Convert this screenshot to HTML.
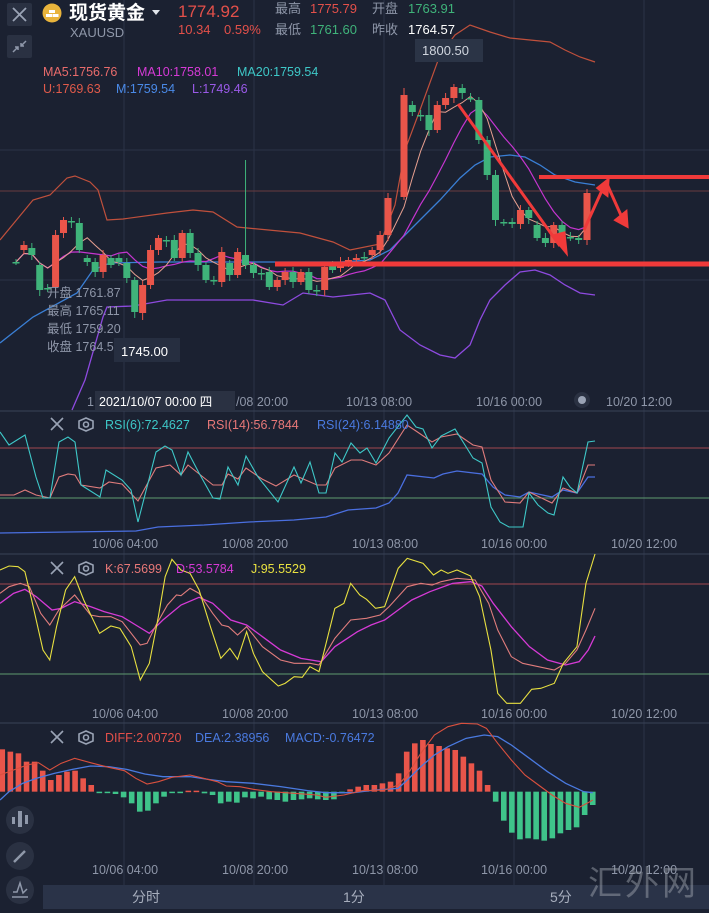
<!DOCTYPE html>
<html><head><meta charset="utf-8">
<style>
html,body{margin:0;padding:0;background:#1b2131;}
body{width:709px;height:913px;overflow:hidden;position:relative;font-family:"Liberation Sans","Noto Sans CJK SC",sans-serif;}
svg{position:absolute;left:0;top:0;}
text{font-family:"Liberation Sans","Noto Sans CJK SC",sans-serif;}
</style></head><body>
<svg id="s" width="709" height="913" viewBox="0 0 709 913" xmlns="http://www.w3.org/2000/svg">
<rect width="709" height="913" fill="#1b2131"/>
<g stroke="#2b3346" stroke-width="1">
<line x1="124" y1="0" x2="124" y2="885"/><line x1="254" y1="0" x2="254" y2="885"/>
<line x1="384" y1="0" x2="384" y2="885"/><line x1="514" y1="0" x2="514" y2="885"/>
<line x1="644" y1="0" x2="644" y2="885"/>
<line x1="0" y1="150" x2="709" y2="150"/><line x1="0" y1="280" x2="709" y2="280"/>
</g>
<line x1="0" y1="191" x2="709" y2="191" stroke="#6a3a3e" stroke-width="1"/>
<g stroke="#3a4356" stroke-width="1">
<line x1="0" y1="411" x2="709" y2="411"/><line x1="0" y1="554" x2="709" y2="554"/>
<line x1="0" y1="723" x2="709" y2="723"/>
</g>
<line x1="0" y1="448" x2="709" y2="448" stroke="#a24850" stroke-width="1"/>
<line x1="0" y1="498" x2="709" y2="498" stroke="#5f9a70" stroke-width="1"/>
<line x1="0" y1="584" x2="709" y2="584" stroke="#a24850" stroke-width="1"/>
<line x1="0" y1="674" x2="709" y2="674" stroke="#5f9a70" stroke-width="1"/>
<g id="main"></g>
<g id="osc"></g>
<line x1="275" y1="264" x2="709" y2="264" stroke="#f03a3a" stroke-width="5"/>
<line x1="539" y1="177" x2="709" y2="177" stroke="#f03a3a" stroke-width="4"/>
<g stroke="#f03a3a" stroke-width="3" fill="#f03a3a">
<line x1="458" y1="104" x2="560" y2="246"/>
<polygon points="553,236 566,252 564,233" />
<line x1="584" y1="230" x2="604" y2="186"/>
<polygon points="598,188 608,180 607,195"/>
<line x1="607" y1="184" x2="624" y2="222"/>
<polygon points="616,220 627,226 626,212"/>
</g>
<rect x="7" y="3" width="25" height="23" rx="2" fill="#2a3142"/>
<path d="M13 8 L26 21 M26 8 L13 21" stroke="#9aa3b5" stroke-width="1.8"/>
<rect x="7" y="35" width="25" height="23" rx="2" fill="#2a3142"/>
<path d="M13 52 L18 47 M15 47 H18 V50 M26 41 L21 46 M21 43 V46 H24" stroke="#8f98aa" stroke-width="1.5" fill="none"/>
<circle cx="52" cy="13" r="9.5" fill="#e9b43c"/>
<rect x="49" y="10" width="6" height="3" fill="#fff"/><rect x="46" y="14" width="6" height="3" fill="#fff"/><rect x="52.5" y="14" width="6" height="3" fill="#fff"/>
<text x="69" y="19" font-size="19" font-weight="bold" fill="#ffffff">现货黄金</text>
<polygon points="152,10 160,10 156,15" fill="#e0e4ea"/>
<text x="70" y="37" font-size="13" fill="#8e96a8">XAUUSD</text>
<text x="178" y="17" font-size="17" fill="#e3504a">1774.92</text>
<text x="178" y="34" font-size="13" fill="#e3504a">10.34</text>
<text x="224" y="34" font-size="13" fill="#e3504a">0.59%</text>
<text x="275" y="13" font-size="13" fill="#8e96a8">最高</text><text x="310" y="13" font-size="13" fill="#e3504a">1775.79</text>
<text x="372" y="13" font-size="13" fill="#8e96a8">开盘</text><text x="408" y="13" font-size="13" fill="#3fb37a">1763.91</text>
<text x="275" y="34" font-size="13" fill="#8e96a8">最低</text><text x="310" y="34" font-size="13" fill="#3fb37a">1761.60</text>
<text x="372" y="34" font-size="13" fill="#8e96a8">昨收</text><text x="408" y="34" font-size="13" fill="#ffffff">1764.57</text>
<rect x="415" y="39" width="68" height="23" fill="#2b3446"/>
<text x="422" y="55" font-size="13" fill="#d0d5de">1800.50</text>
<text x="43" y="76" font-size="12.5" fill="#e86b6b">MA5:1756.76</text>
<text x="137" y="76" font-size="12.5" fill="#d63ad6">MA10:1758.01</text>
<text x="237" y="76" font-size="12.5" fill="#3ec8c8">MA20:1759.54</text>
<text x="43" y="93" font-size="12.5" fill="#e05a4a">U:1769.63</text>
<text x="116" y="93" font-size="12.5" fill="#4a8ae8">M:1759.54</text>
<text x="192" y="93" font-size="12.5" fill="#9a5ae8">L:1749.46</text>
<g font-size="12.5" fill="#8e96a8">
<text x="47" y="297">开盘 1761.87</text><text x="47" y="315">最高 1765.11</text>
<text x="47" y="333">最低 1759.20</text><text x="47" y="351">收盘 1764.55</text>
</g>
<rect x="114" y="338" width="66" height="24" fill="#262e40"/>
<text x="121" y="356" font-size="13" fill="#ffffff">1745.00</text>
<text x="87" y="406" font-size="12.5" fill="#8e96a8">1</text>
<rect x="95" y="391" width="140" height="20" fill="#2a3142"/>
<text x="99" y="406" font-size="12.5" fill="#ffffff">2021/10/07 00:00 四</text>
<text x="236" y="406" font-size="12.5" fill="#8e96a8">/08 20:00</text>
<text x="346" y="406" font-size="12.5" fill="#8e96a8">10/13 08:00</text>
<text x="476" y="406" font-size="12.5" fill="#8e96a8">10/16 00:00</text>
<circle cx="582" cy="400" r="8" fill="#2a3142"/><circle cx="582" cy="400" r="4" fill="#9aa3b5"/>
<text x="606" y="406" font-size="12.5" fill="#8e96a8">10/20 12:00</text>
<g stroke="#9aa3b5" stroke-width="1.6" fill="none">
<path d="M51 418 L63 430 M63 418 L51 430"/><path d="M51 562 L63 574 M63 562 L51 574"/><path d="M51 731 L63 743 M63 731 L51 743"/>
<polygon points="86,418 93,421 93,428 86,431 79,428 79,421"/><circle cx="86" cy="424.5" r="2.5"/>
<polygon points="86,562 93,565 93,572 86,575 79,572 79,565"/><circle cx="86" cy="568.5" r="2.5"/>
<polygon points="86,731 93,734 93,741 86,744 79,741 79,734"/><circle cx="86" cy="737.5" r="2.5"/>
</g>
<text x="105" y="429" font-size="12.5" fill="#3ec8c8">RSI(6):72.4627</text>
<text x="207" y="429" font-size="12.5" fill="#e87878">RSI(14):56.7844</text>
<text x="317" y="429" font-size="12.5" fill="#4a7ae0">RSI(24):6.14880</text>
<text x="105" y="573" font-size="12.5" fill="#e87878">K:67.5699</text>
<text x="176" y="573" font-size="12.5" fill="#d63ad6">D:53.5784</text>
<text x="251" y="573" font-size="12.5" fill="#e8e040">J:95.5529</text>
<text x="105" y="742" font-size="12.5" fill="#e3504a">DIFF:2.00720</text>
<text x="195" y="742" font-size="12.5" fill="#4a7ae0">DEA:2.38956</text>
<text x="285" y="742" font-size="12.5" fill="#4a7ae0">MACD:-0.76472</text>
<g font-size="12.5" fill="#8e96a8">
<text x="92" y="548">10/06 04:00</text><text x="222" y="548">10/08 20:00</text><text x="352" y="548">10/13 08:00</text><text x="481" y="548">10/16 00:00</text><text x="611" y="548">10/20 12:00</text>
<text x="92" y="718">10/06 04:00</text><text x="222" y="718">10/08 20:00</text><text x="352" y="718">10/13 08:00</text><text x="481" y="718">10/16 00:00</text><text x="611" y="718">10/20 12:00</text>
<text x="92" y="874">10/06 04:00</text><text x="222" y="874">10/08 20:00</text><text x="352" y="874">10/13 08:00</text><text x="481" y="874">10/16 00:00</text><text x="611" y="874">10/20 12:00</text>
</g>
<rect x="43" y="885" width="666" height="24" fill="#2a3348"/>
<text x="132" y="902" font-size="14" fill="#a7aebd">分时</text>
<text x="343" y="902" font-size="14" fill="#a7aebd">1分</text>
<text x="550" y="902" font-size="14" fill="#a7aebd">5分</text>
<text x="588" y="895" font-size="34" fill="#9aa0aa" fill-opacity="0.5" letter-spacing="3" font-family="Liberation Serif,Noto Serif CJK SC,serif">汇外网</text>
<circle cx="20" cy="820" r="14" fill="#2a3142"/>
<g fill="#8f98aa"><rect x="12" y="817" width="3" height="7"/><rect x="18" y="811" width="4" height="16"/><rect x="25" y="815" width="3" height="9"/></g>
<circle cx="20" cy="856" r="14" fill="#2a3142"/>
<path d="M14 862 L25 851" stroke="#8f98aa" stroke-width="2.5"/>
<circle cx="20" cy="890" r="14" fill="#2a3142"/>
<path d="M13 892 L17 892 L20 883 L23 893 L27 889 M12 897 H28" stroke="#8f98aa" stroke-width="1.5" fill="none"/>
</svg>
<script>
var NS="http://www.w3.org/2000/svg";
function el(p,t,a){var e=document.createElementNS(NS,t);for(var k in a)e.setAttribute(k,a[k]);p.appendChild(e);return e;}
var main=document.getElementById('main'),osc=document.getElementById('osc');
function pl(g,pts,c,w){el(g,'polyline',{points:pts.map(function(p){return p[0]+','+p[1]}).join(' '),fill:'none',stroke:c,'stroke-width':w||1});}
function pairs(a){var r=[];for(var i=0;i<a.length;i+=2)r.push([a[i],a[i+1]]);return r;}
function zz(a,oy){return pairs(a).map(function(p){return [p[0]/2.21,oy+p[1]/3];});}
pl(main,pairs([0,240,33,200,50,195,67,178,75,176,90,182,98,190,107,220,123,219,167,213,193,210,213,212,237,227,300,233,333,242,350,250,380,244,395,205,405,150,420,110,440,55,455,35,470,25,490,32,510,38,530,40,550,42,565,50,580,57,595,62]),'#c0503c',1.2);
pl(main,pairs([0,343,33,317,77,293,93,270,110,263,160,262,200,262,250,262,300,262,340,262,370,260,390,250,405,235,420,220,440,200,460,178,475,165,490,157,510,155,525,157,540,165,555,175,575,182,595,185]),'#3a7fd5',1.3);
pl(main,pairs([72,410,85,380,103,317,107,307,133,306,167,300,217,300,253,300,283,305,303,293,333,297,370,293,385,300,400,330,420,345,440,355,455,358,470,345,480,320,490,300,505,285,520,272,535,270,550,275,565,285,580,293,595,295]),'#8e4ae0',1.3);
var L=[[262,262],[250,245],[248,255],[265,290],[289,288],[287,235],[233,220],[221,222],[223,250],[258,262],[262,272],[272,255],[258,265],[258,262],[263,278],[280,312],[313,285],[285,250],[250,238],[240,241],[240,258],[258,233],[233,253],[253,265],[265,280],[280,281],[282,252],[263,275],[275,252],[255,265],[265,273],[273,274],[272,287],[287,280],[280,272],[272,282],[282,272],[272,290],[290,291],[290,267],[265,270],[268,262],[262,260],[260,258],[258,257],[255,250],[250,235],[235,198]];
var R=[[197,95],[105,112],[115,116],[115,130],[130,105],[105,98],[98,87],[88,93],[98,99],[100,140],[140,175],[175,220],[222,223],[222,224],[224,210],[210,218],[225,238],[238,243],[243,225],[225,237],[237,238],[238,240],[240,193]];
var C=[],X=[];
L.forEach(function(c,i){C.push(c);X.push(16+i*(388-16)/(L.length-1));});
R.forEach(function(c,j){C.push(c);X.push(404+j*(587-404)/22);});
var closes=C.map(function(c){return c[1];});
function ma(n){var r=[];for(var i=0;i<closes.length;i++){var s=0,k=0;for(var j=Math.max(0,i-n+1);j<=i;j++){s+=closes[j];k++;}r.push([X[i],s/k]);}return r;}
pl(main,ma(10),'#c535d0',1.2);
pl(main,ma(5),'#e8a090',1);
C.forEach(function(c,i){var o=c[0],cl=c[1],x=X[i];var up=cl<o;var col=Math.abs(o-cl)<2?'#3fb37a':(up?'#e9554a':'#3fb37a');
 var top=Math.min(o,cl),bot=Math.max(o,cl);var wt=top-3-(i%3),wb=bot+3+(i%4);
 if(i==29)wt=160; if(i==16)wb=320; if(i==48)wt=88; if(i==51)wt=95;
 el(main,'line',{x1:x,y1:wt,x2:x,y2:wb,stroke:col,'stroke-width':1});
 el(main,'rect',{x:x-3.5,y:top,width:7,height:Math.max(1.5,bot-top),fill:col});});
pl(osc,[[0,533],[136,531],[158,527],[204,525],[249,522],[294,520],[326,517],[348,510],[376,508],[389,503],[398,493],[407,475],[425,477],[434,478],[443,474],[457,471],[482,474],[493,487],[505,495],[520,497],[529,492],[552,497],[563,490],[577,493],[588,477],[595,477]],'#4a6fe0',1.3);
pl(osc,[[0,495],[14,495],[25,490],[36,495],[50,498],[59,477],[68,474],[75,475],[81,485],[100,488],[109,482],[122,484],[138,501],[156,468],[170,465],[181,475],[188,465],[213,485],[222,485],[228,474],[238,479],[246,468],[262,479],[276,486],[294,475],[317,485],[326,485],[335,468],[351,460],[362,460],[376,465],[389,453],[407,425],[416,431],[432,442],[441,437],[457,434],[473,445],[482,447],[491,480],[505,502],[520,503],[529,492],[552,503],[563,488],[577,493],[588,465],[595,465]],'#e07c7c',1.1);
pl(osc,[[0,432],[9,445],[25,435],[36,477],[43,498],[50,498],[59,442],[68,437],[75,442],[81,485],[100,497],[106,470],[122,480],[131,490],[138,522],[156,452],[165,446],[172,450],[181,475],[188,452],[199,473],[213,498],[220,499],[228,467],[238,485],[246,456],[258,477],[278,502],[294,467],[301,483],[310,462],[319,493],[326,493],[335,453],[342,462],[351,443],[360,453],[367,448],[376,463],[389,438],[407,415],[416,427],[423,429],[432,448],[441,436],[455,429],[473,458],[482,463],[491,507],[500,522],[509,527],[523,527],[529,493],[538,505],[548,513],[554,515],[563,477],[570,487],[577,493],[588,442],[595,441]],'#3ec8c8',1.1);
pl(osc,zz([0,160,30,130,55,118,80,140,115,180,135,175,165,155,200,170,230,185,270,200,300,225,330,250,360,210,400,165,440,142,470,160,510,210,545,225,580,260,620,300,665,325,710,335,740,290,790,245,820,225,850,210,880,180,910,150,950,125,1000,100,1040,95,1065,108,1090,160,1130,230,1170,290,1210,330,1250,345,1280,335,1300,300,1315,258],550),'#d63ad6',1.3);
pl(osc,zz([0,130,20,110,45,100,65,110,90,190,110,225,130,180,165,135,200,195,220,200,245,200,270,215,310,285,325,280,345,225,370,165,390,135,400,137,420,115,440,130,470,190,490,225,505,230,525,255,545,230,580,290,620,330,650,340,685,340,705,345,740,265,775,210,810,205,840,195,860,170,900,110,930,100,955,105,975,95,1010,85,1050,90,1080,160,1100,240,1130,320,1155,340,1190,350,1225,360,1250,340,1275,300,1295,240,1315,175],550),'#e07c7c',1.1);
pl(osc,zz([0,60,20,48,40,50,55,65,70,150,95,300,110,330,125,230,145,120,165,80,185,150,220,250,245,228,265,235,290,290,310,390,330,340,350,200,365,80,380,28,400,60,420,70,440,120,465,230,488,325,508,295,525,328,545,245,560,310,580,365,615,408,630,400,650,380,668,382,685,350,705,365,740,175,760,160,775,100,795,135,810,148,830,175,850,170,880,55,900,25,935,40,958,75,975,60,990,70,1010,60,1040,78,1060,140,1085,300,1100,430,1120,460,1150,460,1175,418,1195,415,1225,400,1245,340,1275,290,1295,100,1315,12],550),'#e8e040',1.1);
var B=[88,95,100,125,125,152,180,165,155,152,175,195,217,218,222,232,250,275,272,250,230,218,217,212,212,220,225,250,245,248,232,235,230,238,240,245,240,238,235,238,240,238,220,208,200,195,195,190,185,160,95,70,60,72,78,85,90,110,130,152,195,245,302,338,358,355,358,362,355,340,330,322,285,255];
var step=(1310-5)/(B.length-1);
B.forEach(function(v,i){var x=(5+i*step)/2.21;var y=720+v/3,z=720+215/3;var col=v<215?'#e9554a':'#3fc48a';var t=Math.min(y,z),h=Math.max(1.5,Math.abs(y-z));el(osc,'rect',{x:x-2.8,y:t,width:5.6,height:h,fill:col});});
pl(osc,zz([0,240,20,215,50,190,80,175,120,160,160,148,200,138,240,140,280,148,320,162,360,170,420,170,460,178,500,185,560,190,620,200,680,212,720,218,780,218,830,210,880,205,900,180,930,140,960,105,990,80,1030,55,1070,45,1100,50,1130,75,1170,115,1210,155,1250,190,1290,215,1310,218],720),'#4a7ae0',1.3);
pl(osc,zz([0,165,30,150,60,135,85,128,110,150,135,130,165,115,200,128,240,142,275,152,300,175,325,192,350,185,380,172,420,165,450,175,480,185,500,198,530,200,560,208,600,215,650,220,700,225,720,232,760,225,800,212,850,210,880,195,900,165,930,100,960,45,990,20,1020,10,1055,12,1075,25,1100,70,1130,120,1160,165,1190,195,1220,225,1250,250,1280,262,1300,248,1310,240],720),'#d9503e',1.1);
</script>
</body></html>
